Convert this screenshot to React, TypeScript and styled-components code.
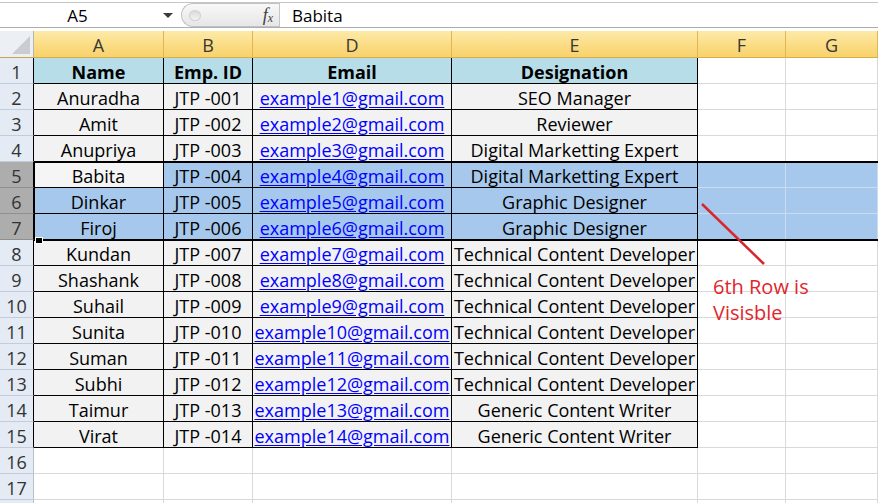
import React from "react";
import styled, { createGlobalStyle } from "styled-components";

const GlobalStyle = createGlobalStyle`
  html, body { margin: 0; padding: 0; background: #fff; overflow: hidden; }
  body { font-family: "Open Sans", "Liberation Sans", sans-serif; color: #000; }
`;

const Page = styled.div`
  position: relative;
  width: 878px;
  height: 503px;
  overflow: hidden;
  background: #fff;
`;

const FormulaBar = styled.div`
  display: flex;
  height: 24px;
  margin-top: 2px;
  margin-bottom: 3px;
  border-top: 1px solid #c6c6c6;
  border-bottom: 1px solid #adadad;
  font-size: 17px;
`;

const NameBox = styled.div`
  width: 155px;
  text-align: center;
  line-height: 25px;
`;

const Drop = styled.div`
  width: 26px;
  display: flex;
  align-items: center;
  justify-content: center;
  &::after {
    content: "";
    border-left: 5px solid transparent;
    border-right: 5px solid transparent;
    border-top: 5px solid #3c3c3c;
  }
`;

const Pill = styled.div`
  position: relative;
  width: 98px;
  display: flex;
  align-items: center;
  justify-content: flex-end;
  padding-right: 6px;
  box-sizing: border-box;
  border: 1px solid #c2c2c2;
  border-right: none;
  border-radius: 13px 0 0 13px;
  background: linear-gradient(#f8f8f8, #e6e6e6);
`;

const Knob = styled.span`
  position: absolute;
  left: 7px;
  top: 6px;
  width: 10px;
  height: 9px;
  border-radius: 50%;
  background: linear-gradient(#d9d9d9, #f4f4f4);
  border: 1px solid #d0d0d0;
`;

const Fx = styled.span`
  font-family: "Liberation Serif", serif;
  font-style: italic;
  font-size: 18px;
  color: #404040;
  sub {
    font-size: 12px;
    vertical-align: -1px;
  }
`;

const FormulaInput = styled.div`
  flex: 1;
  border-left: 1px solid #c6c6c6;
  padding-left: 12px;
  line-height: 25px;
`;

const Sheet = styled.div`
  display: grid;
  grid-template-columns: 34px 130px 89px 199px 246px 88px 1fr;
  grid-template-rows: 27px;
  grid-auto-rows: 26px;
`;

const Corner = styled.div`
  position: relative;
  background: #eceff3;
  border-right: 1px solid #b5b5b5;
  border-bottom: 1px solid #c9a54a;
  box-sizing: border-box;
  svg { position: absolute; right: 3px; bottom: 3px; }
`;

const ColHead = styled.div`
  box-sizing: border-box;
  background: linear-gradient(#fdeaa8, #fbdc84 55%, #f8d26c);
  border-right: 1px solid #e0b552;
  border-bottom: 1px solid #d9ad45;
  text-align: center;
  padding-top: 2px;
  line-height: 25px;
  font-size: 18px;
  color: #383838;
`;

const RowHead = styled.div<{ $selected: boolean; $table: boolean }>`
  box-sizing: border-box;
  background: ${(p) => (p.$selected ? "#adadad" : "#e4ebf4")};
  border-right: 1px solid ${(p) => (p.$table ? "#000" : "#b6c2d0")};
  border-bottom: 1px solid ${(p) => (p.$selected ? "#8f8f8f" : "#c3cdd9")};
  text-align: center;
  padding-top: 2px;
  line-height: 24px;
  font-size: 18px;
  color: #333;
`;

type Kind = "head" | "data" | "empty";

const Cell = styled.div<{ $kind: Kind; $selected: boolean }>`
  box-sizing: border-box;
  white-space: nowrap;
  overflow: hidden;
  text-align: center;
  padding-top: 2px;
  line-height: 24px;
  font-size: 18px;
  font-weight: ${(p) => (p.$kind === "head" ? 700 : 400)};
  background: ${(p) =>
    p.$selected ? "#a6c8ec" : p.$kind === "head" ? "#b7dee8" : p.$kind === "data" ? "#f2f2f2" : "#fff"};
  border-right: 1px solid
    ${(p) => (p.$kind !== "empty" ? "#000" : p.$selected ? "#cadcf1" : "#d9d9d9")};
  border-bottom: 1px solid
    ${(p) => (p.$kind !== "empty" ? "#000" : p.$selected ? "#cadcf1" : "#d9d9d9")};
`;

const Active = styled(Cell)`
  background: #f5f5f5;
`;

const Link = styled.span`
  color: #0000ff;
  text-decoration: underline;
  text-underline-offset: 2px;
`;

const Selection = styled.div`
  position: absolute;
  left: 34px;
  right: -4px;
  top: 161px;
  height: 80px;
  box-sizing: border-box;
  border-top: 2px solid #000;
  border-bottom: 2px solid #000;
  border-left: 1px solid #000;
  pointer-events: none;
`;

const Handle = styled.div`
  position: absolute;
  left: 35px;
  top: 237px;
  width: 6px;
  height: 5px;
  background: #000;
  border: 1px solid #fff;
`;

const Arrow = styled.svg`
  position: absolute;
  left: 698px;
  top: 199px;
`;

const Note = styled.div`
  position: absolute;
  left: 713px;
  top: 274px;
  font-size: 20px;
  line-height: 26px;
  color: #e0262d;
`;

const columns = ["A", "B", "D", "E", "F", "G"];

const table: string[][] = [
  ["Name", "Emp. ID", "Email", "Designation"],
  ["Anuradha", "JTP -001", "example1@gmail.com", "SEO Manager"],
  ["Amit", "JTP -002", "example2@gmail.com", "Reviewer"],
  ["Anupriya", "JTP -003", "example3@gmail.com", "Digital Marketting Expert"],
  ["Babita", "JTP -004", "example4@gmail.com", "Digital Marketting Expert"],
  ["Dinkar", "JTP -005", "example5@gmail.com", "Graphic Designer"],
  ["Firoj", "JTP -006", "example6@gmail.com", "Graphic Designer"],
  ["Kundan", "JTP -007", "example7@gmail.com", "Technical Content Developer"],
  ["Shashank", "JTP -008", "example8@gmail.com", "Technical Content Developer"],
  ["Suhail", "JTP -009", "example9@gmail.com", "Technical Content Developer"],
  ["Sunita", "JTP -010", "example10@gmail.com", "Technical Content Developer"],
  ["Suman", "JTP -011", "example11@gmail.com", "Technical Content Developer"],
  ["Subhi", "JTP -012", "example12@gmail.com", "Technical Content Developer"],
  ["Taimur", "JTP -013", "example13@gmail.com", "Generic Content Writer"],
  ["Virat", "JTP -014", "example14@gmail.com", "Generic Content Writer"],
];

// row 18 only peeks in at the bottom edge, its number is below the fold
const VISIBLE_ROWS = 17;
const TOTAL_ROWS = 18;

export default function App() {
  const rows: React.ReactElement[] = [];
  for (let r = 1; r <= TOTAL_ROWS; r++) {
    const data = table[r - 1];
    const selected = r >= 5 && r <= 7;
    rows.push(
      <RowHead key={"h" + r} $selected={selected} $table={!!data}>
        {r <= VISIBLE_ROWS ? r : ""}
      </RowHead>
    );
    for (let c = 0; c < 6; c++) {
      const value = data && c < 4 ? data[c] : "";
      const kind: Kind = data && c < 4 ? (r === 1 ? "head" : "data") : "empty";
      const isActive = r === 5 && c === 0;
      const content = c === 2 && r > 1 && value ? <Link>{value}</Link> : value;
      rows.push(
        isActive ? (
          <Active key={r + "-" + c} $kind={kind} $selected={false}>
            {content}
          </Active>
        ) : (
          <Cell key={r + "-" + c} $kind={kind} $selected={selected}>
            {content}
          </Cell>
        )
      );
    }
  }

  return (
    <Page>
      <GlobalStyle />
      <FormulaBar>
        <NameBox>A5</NameBox>
        <Drop />
        <Pill>
          <Knob />
          <Fx>
            f<sub>x</sub>
          </Fx>
        </Pill>
        <FormulaInput>Babita</FormulaInput>
      </FormulaBar>
      <Sheet>
        <Corner>
          <svg width="18" height="18" viewBox="0 0 18 18">
            <polygon points="18,0 18,18 0,18" fill="#c9cdd3" />
          </svg>
        </Corner>
        {columns.map((c) => (
          <ColHead key={c}>{c}</ColHead>
        ))}
        {rows}
      </Sheet>
      <Selection />
      <Handle />
      <Arrow width="72" height="70" viewBox="0 0 72 70">
        <line x1="4" y1="5" x2="66" y2="65" stroke="#d9262c" strokeWidth="2.5" />
      </Arrow>
      <Note>
        6th Row is
        <br />
        Visisble
      </Note>
    </Page>
  );
}
